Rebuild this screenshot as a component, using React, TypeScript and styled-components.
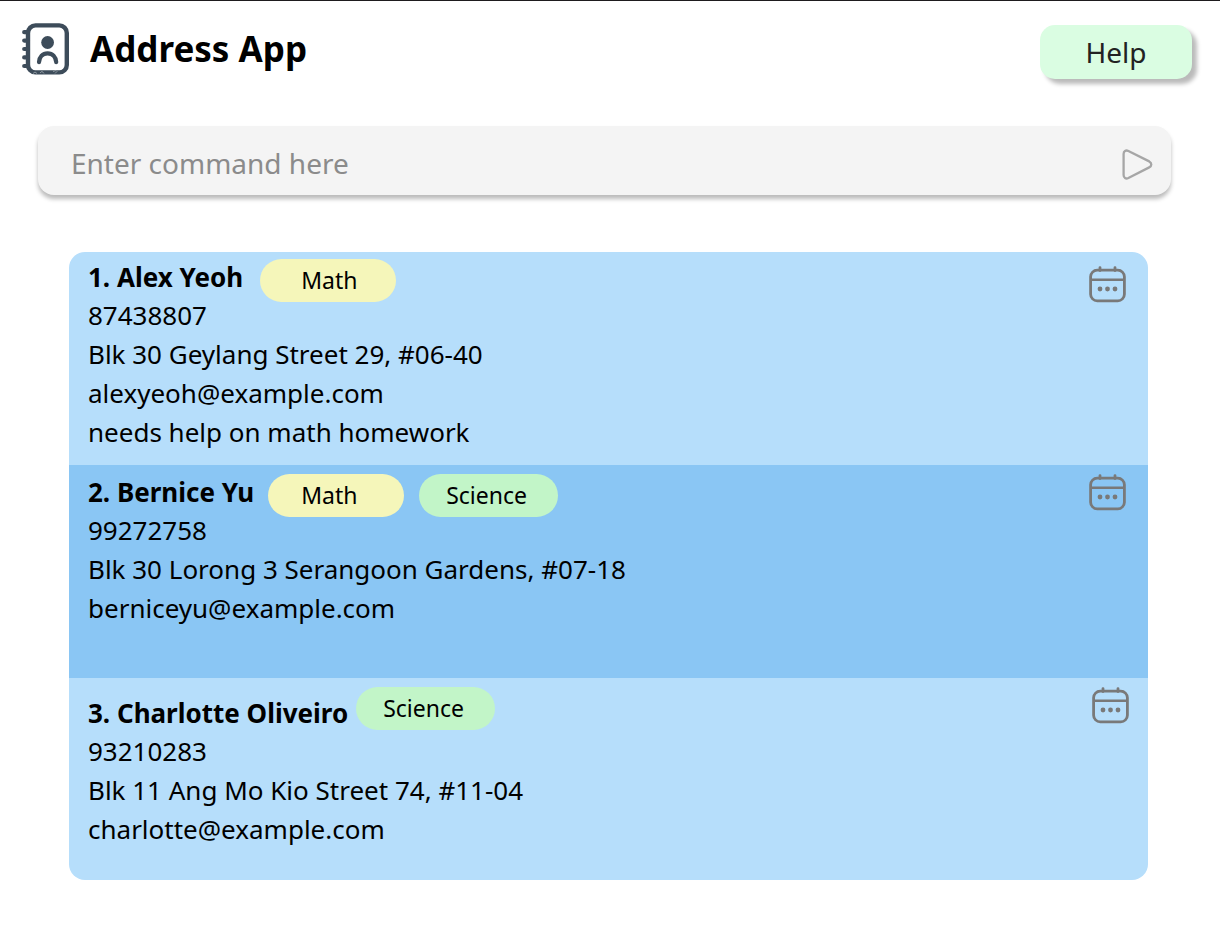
import React from "react";
import styled, { createGlobalStyle } from "styled-components";

const GlobalStyle = createGlobalStyle`
  *, *::before, *::after { box-sizing: border-box; }
  body {
    margin: 0;
    background: #ffffff;
    color: #000000;
    font-family: "Noto Sans", "Open Sans", sans-serif;
  }
  button, input { font-family: inherit; }
`;

const Page = styled.div`
  display: flex;
  flex-direction: column;
  border-top: 1px solid #1e1b1e;
  padding-bottom: 48px;
`;

const TopBar = styled.header`
  display: flex;
  justify-content: space-between;
  align-items: flex-start;
  padding: 22px 28px 0 22px;
`;

const Brand = styled.div`
  display: flex;
  align-items: center;
  gap: 20px;
`;

const Title = styled.h1`
  margin: 0;
  font-size: 35px;
  line-height: 52px;
  font-weight: 700;
`;

const HelpButton = styled.button`
  width: 152px;
  height: 54px;
  margin-top: 2px;
  padding: 0;
  border: 0;
  border-radius: 15px;
  background: #dafde2;
  color: #222222;
  font-size: 28px;
  line-height: 54px;
  box-shadow: 5px 5px 4px rgba(0, 0, 0, 0.27);
  cursor: pointer;
`;

const CommandBar = styled.form`
  display: flex;
  align-items: center;
  height: 69px;
  margin: 47px 49px 0 38px;
  padding: 0 18px 0 33px;
  border-radius: 16px;
  background: #f4f4f4;
  box-shadow: 0 4px 4px rgba(0, 0, 0, 0.27);
`;

const CommandInput = styled.input`
  flex: 1;
  min-width: 0;
  height: 69px;
  padding: 4px 0 0;
  border: 0;
  outline: 0;
  background: transparent;
  font-size: 28px;
  color: #222222;
  &::placeholder { color: #8b8b8b; opacity: 1; }
`;

const IconButton = styled.button`
  display: flex;
  flex: none;
  padding: 0;
  border: 0;
  background: transparent;
  cursor: pointer;
`;

const SendButton = styled(IconButton)`
  margin-top: 8px;
`;

const CalendarButton = styled(IconButton)<{ $drop: number }>`
  margin-top: ${(p) => p.$drop}px;
`;

const ContactList = styled.ul`
  list-style: none;
  margin: 57px 72px 0 69px;
  padding: 0;
  border-radius: 16px;
  overflow: hidden;
`;

const ContactRow = styled.li<{ $top: number; $right: number; $height: number }>`
  display: flex;
  align-items: flex-start;
  min-height: ${(p) => p.$height}px;
  padding: ${(p) => p.$top}px ${(p) => p.$right}px 0 19px;
  background: #b6defb;
  &:nth-child(even) { background: #8ac6f4; }
`;

const Details = styled.div`
  flex: 1;
  min-width: 0;
`;

const NameLine = styled.div<{ $height: number; $gap: number }>`
  display: flex;
  align-items: flex-start;
  gap: ${(p) => p.$gap}px;
  height: ${(p) => p.$height}px;
`;

const Name = styled.h2`
  align-self: flex-end;
  margin: 0;
  font-size: 26px;
  line-height: 37px;
  font-weight: 700;
  white-space: nowrap;
`;

const Tags = styled.div`
  display: flex;
  gap: 15px;
`;

const Tag = styled.span<{ $subject: Subject; $inset: number }>`
  width: ${(p) => (p.$subject === "Math" ? 136 : 139)}px;
  height: 43px;
  padding-left: ${(p) => p.$inset}px;
  border-radius: 22px;
  background: ${(p) => (p.$subject === "Math" ? "#f5f6ba" : "#c2f5c8")};
  font-size: 23px;
  line-height: 42px;
`;

const Line = styled.p`
  margin: 0;
  font-size: 26px;
  line-height: 39px;
`;

type Subject = "Math" | "Science";

interface Contact {
  name: string;
  gap: number;
  top: number;
  right: number;
  height: number;
  nameHeight: number;
  iconDrop: number;
  tags: { subject: Subject; inset: number }[];
  lines: string[];
}

const contacts: Contact[] = [
  {
    name: "1. Alex Yeoh",
    gap: 17, top: 7, right: 22, height: 213, nameHeight: 37, iconDrop: 7,
    tags: [{ subject: "Math", inset: 41 }],
    lines: ["87438807", "Blk 30 Geylang Street 29, #06-40", "alexyeoh@example.com", "needs help on math homework"],
  },
  {
    name: "2. Bernice Yu",
    gap: 14, top: 9, right: 22, height: 213, nameHeight: 37, iconDrop: 0,
    tags: [{ subject: "Math", inset: 33 }, { subject: "Science", inset: 27 }],
    lines: ["99272758", "Blk 30 Lorong 3 Serangoon Gardens, #07-18", "berniceyu@example.com"],
  },
  {
    name: "3. Charlotte Oliveiro",
    gap: 8, top: 9, right: 19, height: 202, nameHeight: 45, iconDrop: 0,
    tags: [{ subject: "Science", inset: 27 }],
    lines: ["93210283", "Blk 11 Ang Mo Kio Street 74, #11-04", "charlotte@example.com"],
  },
];

const AddressBookIcon = () => (
  <svg width="48" height="52" viewBox="0 0 48 52" fill="none" stroke="#3d4c5a" aria-hidden="true">
    <rect x="6" y="2.4" width="38.8" height="47" rx="7.5" strokeWidth="4.4" />
    <path d="M2.2 9.2H6M2.2 17.6H6M2.2 26H6M2.2 34.4H6M2.2 43H6" strokeWidth="4.2" strokeLinecap="round" />
    <circle cx="25.6" cy="19.5" r="6.4" fill="#3d4c5a" stroke="none" />
    <path d="M17 39.2C17.4 33.6 20.6 30.4 25.6 30.4S33.8 33.6 34.2 39.2" strokeWidth="4.2" strokeLinecap="round" />
    <path d="M11 50.5q2-3 4 0M18 50q2-3 4 .5M31 48.5q4-2 4 0l-2 2" stroke="#8d979f" strokeWidth="1" />
  </svg>
);

const PlayIcon = () => (
  <svg width="31" height="32" viewBox="0 0 31 32" fill="none" stroke="#a6a6a6" strokeWidth="2.3" strokeLinejoin="round" aria-hidden="true">
    <path d="M1.6 5C1.6 2 3.8.8 6.4 2L27.2 12.4C30 14 30 17 27.2 18.4L6.4 29C3.8 30.2 1.6 29 1.6 26Z" />
  </svg>
);

const CalendarIcon = () => (
  <svg width="37" height="37" viewBox="0 0 37 37" fill="none" stroke="#797979" strokeWidth="2.8" aria-hidden="true">
    <rect x="1.6" y="4.2" width="33.8" height="30.6" rx="6.6" />
    <path d="M2 13.8H35" strokeWidth="2.6" />
    <path d="M11 1.6V4.6M26 1.6V4.6" strokeLinecap="round" />
    <g fill="#797979" stroke="none">
      <circle cx="11" cy="23" r="2.4" />
      <circle cx="18.5" cy="23" r="2.4" />
      <circle cx="26" cy="23" r="2.4" />
    </g>
  </svg>
);

export default function App() {
  return (
    <>
      <GlobalStyle />
      <Page>
        <TopBar>
          <Brand>
            <AddressBookIcon />
            <Title>Address App</Title>
          </Brand>
          <HelpButton type="button">Help</HelpButton>
        </TopBar>
        <main>
          <CommandBar onSubmit={(e: React.FormEvent) => e.preventDefault()}>
            <CommandInput type="text" aria-label="Command" placeholder="Enter command here" />
            <SendButton type="submit" aria-label="Run command">
              <PlayIcon />
            </SendButton>
          </CommandBar>
          <ContactList>
            {contacts.map((c) => (
              <ContactRow key={c.name} $top={c.top} $right={c.right} $height={c.height}>
                <Details>
                  <NameLine $height={c.nameHeight} $gap={c.gap}>
                    <Name>{c.name}</Name>
                    <Tags>
                      {c.tags.map((t) => (
                        <Tag key={t.subject} $subject={t.subject} $inset={t.inset}>{t.subject}</Tag>
                      ))}
                    </Tags>
                  </NameLine>
                  {c.lines.map((l) => (
                    <Line key={l}>{l}</Line>
                  ))}
                </Details>
                <CalendarButton type="button" aria-label={`Schedule for ${c.name}`} $drop={c.iconDrop}>
                  <CalendarIcon />
                </CalendarButton>
              </ContactRow>
            ))}
          </ContactList>
        </main>
      </Page>
    </>
  );
}
